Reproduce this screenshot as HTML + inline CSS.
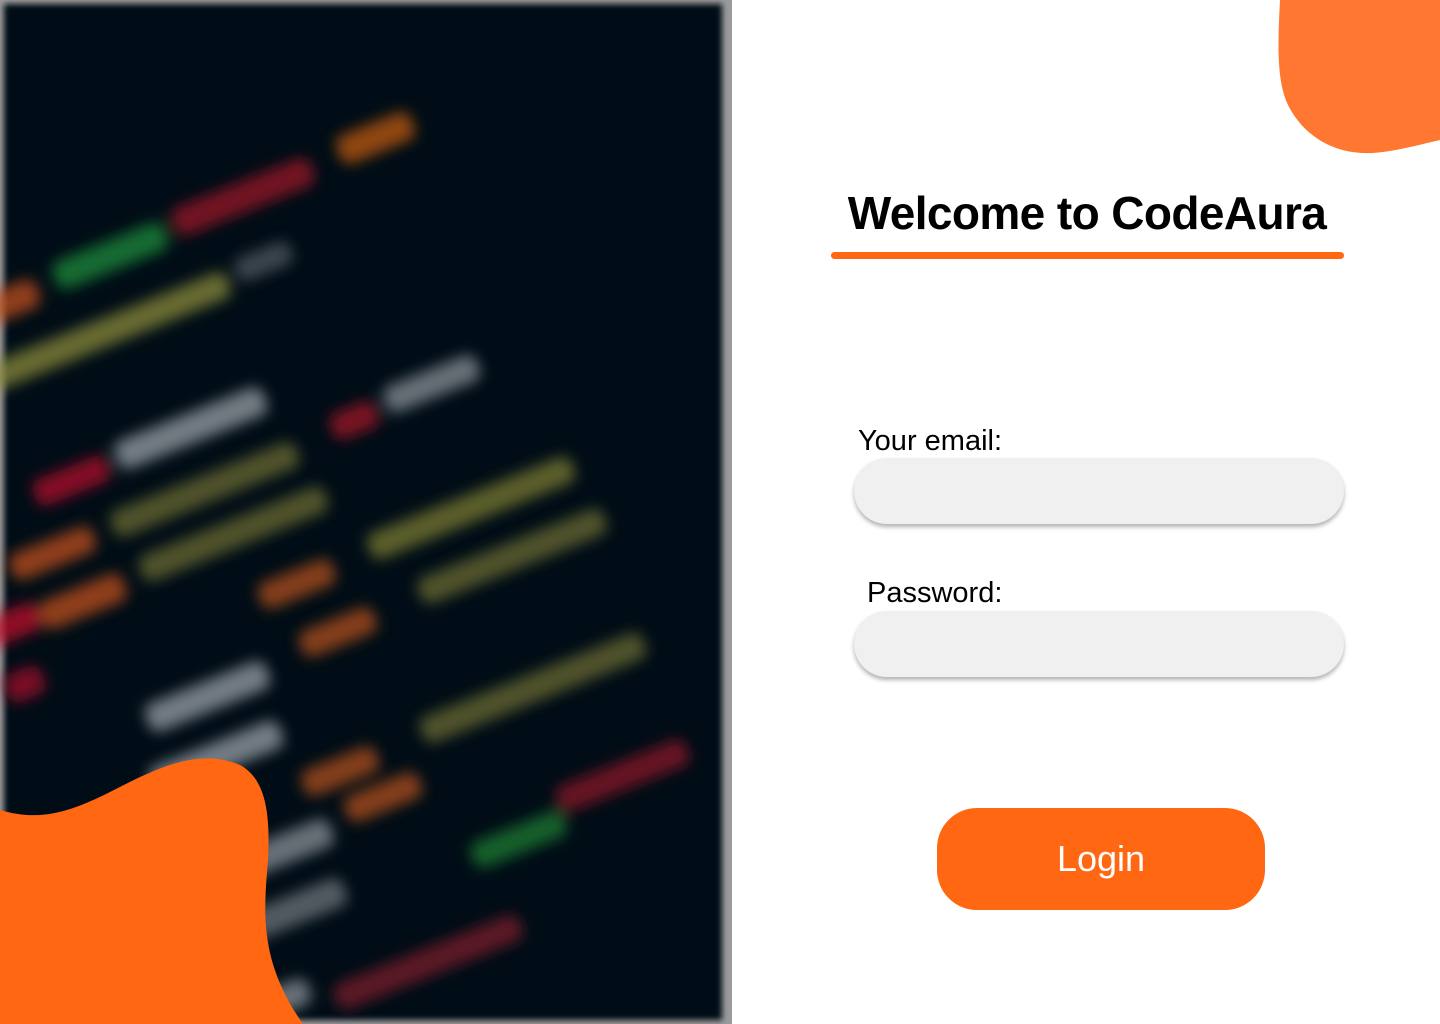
<!DOCTYPE html>
<html><head><meta charset="utf-8"><style>
html,body{margin:0;padding:0;width:1440px;height:1024px;overflow:hidden;background:#fff;font-family:"Liberation Sans",Arial,sans-serif;position:relative}
.left{position:absolute;left:0;top:0;width:732px;height:1024px;background:#9a9a9a;overflow:hidden}
.title{position:absolute;left:831px;width:512px;top:186px;text-align:center;font-size:46px;font-weight:bold;color:#000;letter-spacing:-0.6px}
.uline{position:absolute;left:831px;top:252px;width:513px;height:7px;border-radius:4px;background:#FF6712}
.lbl{position:absolute;font-size:29px;color:#000}
.inp{position:absolute;left:854px;width:490px;height:66px;border-radius:33px;background:#f0f0f0;box-shadow:0 3px 4px rgba(0,0,0,.3)}
.btn{position:absolute;left:937px;top:808px;width:328px;height:102px;border-radius:40px;background:#FF6712;color:#fff;font-size:36px;text-align:center;line-height:102px}
</style></head><body>
<div class="left">
<svg width="732" height="1024" style="position:absolute;left:0;top:0;display:block">
<defs><filter id="b" x="-20%" y="-20%" width="140%" height="140%"><feGaussianBlur stdDeviation="7"/></filter>
<filter id="e"><feGaussianBlur stdDeviation="3"/></filter></defs>
<rect x="4" y="4" width="718" height="1016" fill="#050a12" filter="url(#e)"/>
<g filter="url(#b)" transform="rotate(-22 360 500)" opacity="0.75">
<rect x="60" y="170" width="80" height="30" rx="10" fill="#c0501a"/>
<rect x="160" y="165" width="120" height="30" rx="10" fill="#1e8a3a"/>
<rect x="290" y="160" width="150" height="30" rx="10" fill="#9a1428"/>
<rect x="470" y="155" width="80" height="30" rx="10" fill="#c05a10"/>
<rect x="-60" y="235" width="380" height="28" rx="10" fill="#8a8a3a"/>
<rect x="330" y="230" width="60" height="25" rx="10" fill="#505860"/>
<rect x="60" y="360" width="80" height="28" rx="10" fill="#b0102a"/>
<rect x="150" y="355" width="160" height="30" rx="10" fill="#9aa0a8"/>
<rect x="10" y="420" width="90" height="28" rx="10" fill="#c0501a"/>
<rect x="120" y="418" width="200" height="28" rx="10" fill="#6a6a30"/>
<rect x="360" y="410" width="50" height="28" rx="10" fill="#a01428"/>
<rect x="420" y="405" width="100" height="28" rx="10" fill="#8a9098"/>
<rect x="-80" y="470" width="100" height="30" rx="10" fill="#c0102a"/>
<rect x="20" y="475" width="90" height="30" rx="10" fill="#c0501a"/>
<rect x="130" y="470" width="200" height="28" rx="10" fill="#6a6a30"/>
<rect x="-40" y="530" width="40" height="30" rx="10" fill="#a0102a"/>
<rect x="230" y="540" width="80" height="28" rx="10" fill="#b0501a"/>
<rect x="350" y="535" width="220" height="28" rx="10" fill="#7a7a30"/>
<rect x="80" y="610" width="130" height="30" rx="10" fill="#9aa0a8"/>
<rect x="250" y="600" width="80" height="28" rx="10" fill="#b0501a"/>
<rect x="380" y="595" width="200" height="28" rx="10" fill="#6a6a30"/>
<rect x="60" y="670" width="140" height="30" rx="10" fill="#9aa0a8"/>
<rect x="200" y="730" width="80" height="28" rx="10" fill="#b0501a"/>
<rect x="330" y="725" width="240" height="28" rx="10" fill="#6a6a30"/>
<rect x="-30" y="760" width="90" height="30" rx="10" fill="#a0102a"/>
<rect x="90" y="780" width="120" height="30" rx="10" fill="#8a9098"/>
<rect x="230" y="770" width="80" height="28" rx="10" fill="#b0501a"/>
<rect x="60" y="840" width="140" height="30" rx="10" fill="#70757c"/>
<rect x="330" y="860" width="100" height="28" rx="10" fill="#1e7a30"/>
<rect x="430" y="840" width="140" height="28" rx="10" fill="#8a1428"/>
<rect x="150" y="940" width="200" height="28" rx="10" fill="#7a1a2a"/>
<rect x="30" y="920" width="100" height="28" rx="10" fill="#8a9098"/>
</g>
<path d="M0 810 C40 822 70 812 110 792 C160 766 200 748 240 765 C268 780 270 820 268 860 C264 910 258 960 303 1024 L0 1024 Z" fill="#FF6712"/>
</svg>
</div>
<svg width="162" height="156" style="position:absolute;left:1278px;top:0;display:block">
<path d="M2 0 C0 40 -2 80 10 105 C25 135 55 155 95 153 C120 151 140 145 162 140 L162 0 Z" fill="#FF7730"/>
</svg>
<div class="title">Welcome to CodeAura</div>
<div class="uline"></div>
<div class="lbl" style="left:858px;top:425px">Your email:</div>
<div class="inp" style="top:458px"></div>
<div class="lbl" style="left:867px;top:577px">Password:</div>
<div class="inp" style="top:611px"></div>
<div class="btn">Login</div>
</body></html>
